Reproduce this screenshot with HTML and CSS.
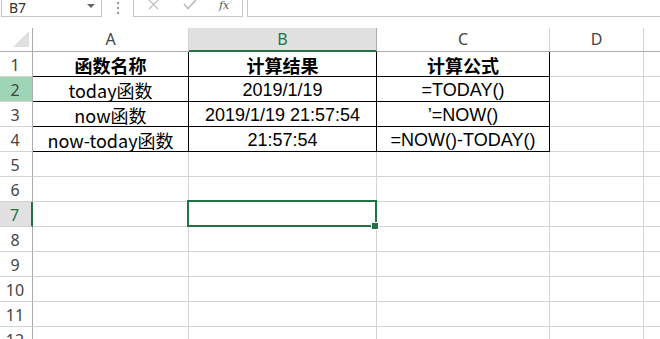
FILE: index.html
```html
<!DOCTYPE html>
<html lang="zh">
<head>
<meta charset="utf-8">
<link rel="stylesheet" href="styles.css">
</head>
<body>
<div class="toolbar">
  <div class="namebox"><span class="ref">B7</span><span class="arrow"></span></div>
  <div class="dots"><i></i><i></i><i></i></div>
  <div class="fxbox">
    <svg class="ic" width="14" height="12" viewBox="0 0 14 12"><path d="M2 0 L11 9 M11 0 L2 9" stroke="#c0c0c0" stroke-width="1.3" fill="none"/></svg>
    <svg class="ic" width="16" height="12" viewBox="0 0 16 12"><path d="M2 4 L6 8.5 L14 0" stroke="#c0c0c0" stroke-width="1.8" fill="none"/></svg>
    <span class="fx">fx</span>
  </div>
  <div class="formula"></div>
</div>
<div class="gap"></div>
<div class="sheet">
  <div class="corner"><span class="tri"></span></div>
  <div class="ch">A</div>
  <div class="ch sel">B</div>
  <div class="ch">C</div>
  <div class="ch">D</div>
  <div class="ch last"></div>

  <div class="rh">1</div>
  <div class="c t cjk bold">函数名称</div>
  <div class="c t cjk bold">计算结果</div>
  <div class="c t cjk bold">计算公式</div>
  <div class="c tl"></div>
  <div class="c last"></div>

  <div class="rh hl">2</div>
  <div class="c t cjk">today函数</div>
  <div class="c t lat">2019/1/19</div>
  <div class="c t lat">=TODAY()</div>
  <div class="c tl"></div>
  <div class="c last"></div>

  <div class="rh">3</div>
  <div class="c t cjk">now函数</div>
  <div class="c t lat">2019/1/19 21:57:54</div>
  <div class="c t lat">&#8217;=NOW()</div>
  <div class="c tl"></div>
  <div class="c last"></div>

  <div class="rh">4</div>
  <div class="c t cjk">now-today函数</div>
  <div class="c t lat">21:57:54</div>
  <div class="c t lat">=NOW()-TODAY()</div>
  <div class="c tl"></div>
  <div class="c last"></div>

  <div class="rh">5</div><div class="c"></div><div class="c"></div><div class="c"></div><div class="c"></div><div class="c last"></div>
  <div class="rh">6</div><div class="c"></div><div class="c"></div><div class="c"></div><div class="c"></div><div class="c last"></div>
  <div class="rh act">7</div><div class="c"></div><div class="c active"><span class="handle"></span></div><div class="c"></div><div class="c"></div><div class="c last"></div>
  <div class="rh">8</div><div class="c"></div><div class="c"></div><div class="c"></div><div class="c"></div><div class="c last"></div>
  <div class="rh">9</div><div class="c"></div><div class="c"></div><div class="c"></div><div class="c"></div><div class="c last"></div>
  <div class="rh">10</div><div class="c"></div><div class="c"></div><div class="c"></div><div class="c"></div><div class="c last"></div>
  <div class="rh">11</div><div class="c"></div><div class="c"></div><div class="c"></div><div class="c"></div><div class="c last"></div>
  <div class="rh">12</div><div class="c"></div><div class="c"></div><div class="c"></div><div class="c"></div><div class="c last"></div>
</div>
</body>
</html>
```
FILE: styles.css
```css
* { box-sizing: border-box; }
html, body { margin: 0; padding: 0; background: #fff; overflow: hidden; }
body { width: 660px; height: 339px; font-family: "Noto Sans", "Noto Sans CJK SC", sans-serif; }

.toolbar { display: flex; height: 17px; align-items: stretch; }
.namebox {
  width: 101px; margin-left: 1px; border: 1px solid #c6c6c6; border-top: none;
  display: flex; align-items: center; justify-content: space-between; padding: 0 6px 0 7px;
}
.ref { font-family: "Noto Sans", sans-serif; font-size: 14px; color: #333; line-height: 14px; margin-top: -1px; }
.arrow { width: 0; height: 0; border-left: 4px solid transparent; border-right: 4px solid transparent; border-top: 4px solid #666; margin-top: -5px; }
.dots { width: 31px; display: flex; flex-direction: column; align-items: center; justify-content: center; gap: 3px; padding-bottom: 2px; }
.dots i { display: block; width: 2px; height: 2px; background: #999; }
.fxbox {
  width: 110px; border: 1px solid #c6c6c6; border-top: none;
  display: flex; align-items: flex-start; padding-left: 13px; gap: 21px;
}
.fx { font-family: "DejaVu Serif", serif; font-style: italic; font-size: 11px; color: #555; line-height: 12px; }
.formula { flex: 1; margin-left: 4px; border: 1px solid #c6c6c6; border-top: none; border-right: none; }
.gap { height: 11px; }

.sheet {
  display: grid;
  grid-template-columns: 33px 156px 188px 173px 94px 1fr;
  grid-template-rows: 24px repeat(12, 25px);
}
.corner { border-right: 1px solid #ababab; border-bottom: 1px solid #ababab; position: relative; }
.tri {
  position: absolute; right: 3px; bottom: 4px; width: 0; height: 0;
  border-left: 16px solid transparent; border-bottom: 16px solid #dfdfdf;
}
.ch {
  border-right: 1px solid #d4d4d4; border-bottom: 1px solid #ababab;
  font-size: 16px; color: #444; text-align: center; line-height: 23px;
}
.ch.sel { background: #e1e1e1; color: #217346; border-bottom: 2px solid #217346; border-right-color: #ababab; line-height: 22px; }
.ch.last { border-right: none; }

.rh {
  border-right: 1px solid #ababab; border-bottom: 1px solid #d4d4d4;
  font-size: 16px; color: #444; text-align: center; line-height: 26px; padding-right: 2px;
}
.rh.hl { background: #9fd5b7; }
.rh.act { background: #e1e1e1; color: #217346; border-right: 2px solid #217346; }

.c { border-right: 1px solid #d4d4d4; border-bottom: 1px solid #d4d4d4; text-align: center; white-space: nowrap; color: #000; }
.c.last { border-right: none; }
.c.t { border-right-color: #000; border-bottom-color: #000; font-size: 18px; line-height: 24px; padding-top: 1px; }
.c.tl { border-bottom-color: #d4d4d4; }
.cjk { font-family: "Noto Sans CJK SC", sans-serif; }
.lat { font-family: "Liberation Sans", "Noto Sans CJK SC", sans-serif; }
.bold { font-weight: 700; }

.c.active { position: relative; }
.active::after {
  content: ""; position: absolute; left: -2px; top: -2px; right: -1px; bottom: -1px;
  border: 2px solid #217346;
}
.handle {
  position: absolute; right: -3px; bottom: -4px; width: 6px; height: 6px;
  background: #217346; border: 1px solid #fff; z-index: 2; box-sizing: content-box;
}
```
